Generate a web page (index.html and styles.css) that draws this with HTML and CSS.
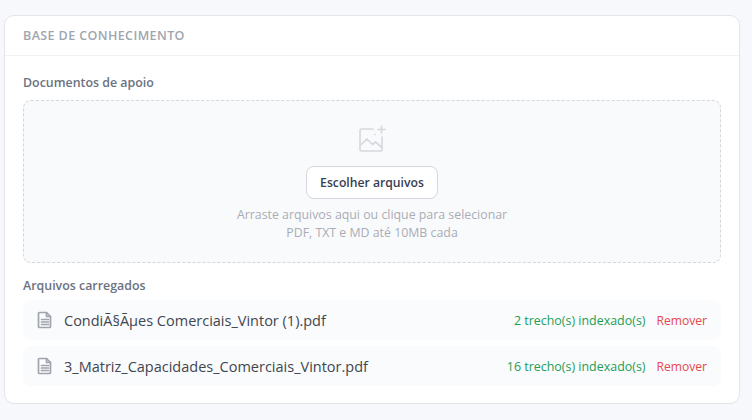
FILE: index.html
```html
<!DOCTYPE html>
<html lang="pt-BR">
<head>
  <meta charset="UTF-8" />
  <meta name="viewport" content="width=device-width, initial-scale=1.0" />
  <title>Base de conhecimento</title>
  <link rel="stylesheet" href="styles.css">
</head>
<body>
  <div class="card">
    <div class="card-header">BASE DE CONHECIMENTO</div>
    <div class="card-body">
      <label class="field-label">Documentos de apoio</label>
      <div class="dropzone">
        <svg class="drop-icon" width="30" height="30" viewBox="0 0 30 30" fill="none" stroke="#d6d9de" stroke-width="1.7" stroke-linecap="round" stroke-linejoin="round">
          <path d="M16 5H4.500A1.500 1.500 0 0 0 3 6.500v19A1.500 1.500 0 0 0 4.500 27h19a1.500 1.500 0 0 0 1.500-1.500V13"/>
          <path d="M3.500 21l6.500-6 5.500 5.500 3-2.500 6.500 5.500"/>
          <path d="M24.500 2v7M21 5.500h7"/>
          <path d="M18 10.500h.01"/>
        </svg>
        <button class="choose-btn" type="button">Escolher arquivos</button>
        <p class="drop-hint">Arraste arquivos aqui ou clique para selecionar<br>PDF, TXT e MD até 10MB cada</p>
      </div>
      <label class="field-label files-label">Arquivos carregados</label>
      <div class="file-row">
        <svg class="file-icon" width="16" height="18" viewBox="0 0 16 18" fill="none" stroke="#a0a4ac" stroke-width="1.700" stroke-linejoin="round" stroke-linecap="round">
          <path d="M2.500 1.500h7l4 4v10a1 1 0 0 1-1 1h-10a1 1 0 0 1-1-1v-13a1 1 0 0 1 1-1z"/>
          <path d="M9.500 1.500v4h4M4.500 8.500h7M4.500 11h7M4.500 13.500h7"/>
        </svg>
        <span class="file-name">CondiÃ§Ãµes Comerciais_Vintor (1).pdf</span>
        <span class="file-status">2 trecho(s) indexado(s)</span>
        <a class="file-remove">Remover</a>
      </div>
      <div class="file-row">
        <svg class="file-icon" width="16" height="18" viewBox="0 0 16 18" fill="none" stroke="#a0a4ac" stroke-width="1.700" stroke-linejoin="round" stroke-linecap="round">
          <path d="M2.500 1.500h7l4 4v10a1 1 0 0 1-1 1h-10a1 1 0 0 1-1-1v-13a1 1 0 0 1 1-1z"/>
          <path d="M9.500 1.500v4h4M4.500 8.500h7M4.500 11h7M4.500 13.500h7"/>
        </svg>
        <span class="file-name">3_Matriz_Capacidades_Comerciais_Vintor.pdf</span>
        <span class="file-status">16 trecho(s) indexado(s)</span>
        <a class="file-remove">Remover</a>
      </div>
    </div>
  </div>
</body>
</html>
```

FILE: styles.css
```css
html, body { height: 100%; }
body { margin: 0; padding: 15px 12px 0 4px; background: #f7f8fb; color: #374151; font-family: "Open Sans", "Noto Sans", sans-serif; overflow: hidden; }
.card { background: #fff; border: 1px solid #e3e5e9; border-radius: 10px; height: 389px; box-sizing: border-box; }
.card-header { height: 40px; line-height: 40px; padding: 0 18px; border-bottom: 1px solid #f0f1f3; font-size: 12.5px; font-weight: 600; letter-spacing: 0.4px; color: #a0a5b0; box-sizing: border-box; }
.card-body { padding: 18px 18px 0; }
.field-label { display: block; font-size: 12.4px; font-weight: 600; line-height: 17px; color: #6b7280; }
.dropzone { display: flex; flex-direction: column; align-items: center; box-sizing: border-box; height: 163px; margin-top: 9px; padding-top: 23px; background: #f9fafc; border: 1px dashed #d4d7dc; border-radius: 8px; }
.drop-icon { display: block; }
.choose-btn { height: 33px; margin-top: 12px; padding: 0 13px; background: #fff; border: 1px solid #d4d7dc; border-radius: 8px; font-family: inherit; font-size: 12.2px; font-weight: 600; color: #374151; }
.drop-hint { margin: 7px 0 0; font-size: 12.35px; line-height: 18px; text-align: center; color: #a9adb5; }
.files-label { margin-top: 14px; }
.file-row { display: flex; align-items: center; box-sizing: border-box; height: 40px; margin-top: 6px; padding: 0 14px; background: #fafbfc; border-radius: 8px; }
.file-icon { flex: none; margin-right: 11px; }
.file-name { flex: 1; font-size: 14.5px; color: #3f4650; }
.file-status { font-size: 12.45px; color: #1f9d55; }
.file-remove { margin-left: 11px; font-size: 12.1px; color: #e5484d; }
```
